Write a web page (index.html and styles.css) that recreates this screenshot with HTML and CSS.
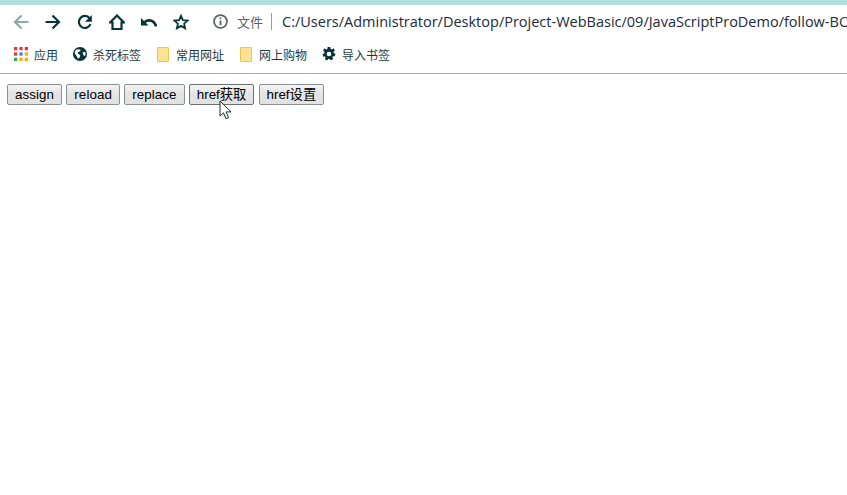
FILE: index.html
```html
<!DOCTYPE html>
<html lang="zh">
<head>
<meta charset="utf-8">
<title>href</title>
<link rel="stylesheet" href="styles.css">
</head>
<body>
<div class="band"></div>
<header class="toolbar">
  <nav class="navicons">
    <svg class="ic" viewBox="0 0 16 16"><path class="back" d="M15.500 8H2M8.500 1.500L2 8l6.500 6.500"/></svg>
    <svg class="ic" viewBox="0 0 16 16"><path d="M.5 8H14M7.500 1.500L14 8l-6.500 6.500"/></svg>
    <svg class="ic" viewBox="0 0 16 16"><path d="M13.500 10.200A6 6 0 1 1 12.600 4.200"/><path class="fill" d="M14.800 1v6.800H8z"/></svg>
    <svg class="ic" viewBox="0 0 16 16"><path d="M8 1.500L1 8.500h2.500V15h9V8.500H15z"/></svg>
    <svg class="ic" viewBox="0 0 16 16"><path class="heavy" d="M15.200 12.500C13.500 6.500 8.500 4.800 3.500 8"/><path class="fill" d="M0 4v7.500h7.500z"/></svg>
    <svg class="ic" viewBox="0 0 16 16"><path class="thin" d="M8 1.800l1.900 4.300 4.700.5-3.500 3.100 1 4.600L8 11.900l-4.100 2.400 1-4.600L1.400 6.600l4.700-.5z"/></svg>
  </nav>
  <div class="address">
    <svg class="info" viewBox="0 0 14 14"><circle cx="7" cy="7" r="6"/><path d="M7 6v4.500M7 3.200v1.600"/></svg>
    <span class="proto">文件</span>
    <span class="sep"></span>
    <span class="url">C:/Users/Administrator/Desktop/Project-WebBasic/09/JavaScriptProDemo/follow-BOM/location.html</span>
  </div>
</header>
<div class="bookmarks">
  <a class="bm bm-apps">
    <svg class="apps" viewBox="0 0 12 12">
      <rect class="r" x="0" y="0" width="2.800" height="2.800"/><rect class="r" x="4.600" y="0" width="2.800" height="2.800"/><rect class="r" x="9.200" y="0" width="2.800" height="2.800"/>
      <rect class="r" x="0" y="4.600" width="2.800" height="2.800"/><rect class="b" x="4.600" y="4.600" width="2.800" height="2.800"/><rect class="y" x="9.200" y="4.600" width="2.800" height="2.800"/>
      <rect class="g" x="0" y="9.200" width="2.800" height="2.800"/><rect class="y" x="4.600" y="9.200" width="2.800" height="2.800"/><rect class="y" x="9.200" y="9.200" width="2.800" height="2.800"/>
    </svg>应用</a>
  <a class="bm bm-globe">
    <svg class="glyph" viewBox="0 0 14 14"><circle class="solid" cx="7" cy="7" r="7"/><path class="white" d="M3 2.800c1.500-.8 3.500-.8 4.500 0 .5 1-1 2-2.300 2.300-1 .5-.5 2 .8 2.200 1.300.5 1.500 1.500.8 2.700-.5 1-1 1.800-1.800 1.500-1-1-1-2-1.700-3C2.500 7.500 1.800 6.500 1.700 5.500 2 4.500 2.400 3.500 3 2.800zM9.500 5.500c1-.7 2-.7 2.800-.5.500 1.500.3 3-.5 4.300-.8-.3-1.300-1-1.500-1.800-.3-.7-.8-1.200-.8-2z"/></svg>杀死标签</a>
  <a class="bm bm-folder"><span class="page"></span>常用网址</a>
  <a class="bm bm-shop"><span class="page"></span>网上购物</a>
  <a class="bm bm-gear">
    <svg class="glyph" viewBox="0 0 14 14"><path class="solid" fill-rule="evenodd" d="M5.700 0h2.600l.4 1.900 1 .5L11.500 1.300l1.400 2.200-1.400 1.300.1 1.200 1.800.8-.5 2.400-1.900 0-.6 1 .8 1.800-2.200 1.300-1.300-1.400H6.300L5 13.500l-2.200-1.300.8-1.800-.6-1-1.900 0-.5-2.400 1.800-.8.100-1.200L1.100 3.500 2.500 1.300l1.800 1.100 1-.5zM7 4.700a2.300 2.300 0 1 0 0 4.600 2.300 2.300 0 0 0 0-4.600z"/></svg>导入书签</a>
</div>
<main class="content">
  <button class="btn" type="button">assign</button>
  <button class="btn" type="button">reload</button>
  <button class="btn" type="button">replace</button>
  <button class="btn btn-zh btn-hover" type="button">href获取</button>
  <button class="btn btn-zh" type="button">href设置</button>
</main>
<svg class="cursor" viewBox="0 0 14 21"><path d="M1 1v15l3.500-3.200 2.500 6 2.600-1.100-2.500-5.800h5z"/></svg>
</body>
</html>
```
FILE: styles.css
```css
html, body {
  margin: 0;
  padding: 0;
  background: #fff;
  overflow: hidden;
  height: 100%;
}
body {
  position: relative;
  font-family: "Open Sans", "Noto Sans CJK SC", sans-serif;
  color: #1f3a3d;
}
.band {
  height: 5px;
  background: #b2dfdc;
}
.toolbar {
  height: 33px;
  display: flex;
  align-items: center;
  white-space: nowrap;
  overflow: hidden;
}
.navicons {
  display: flex;
  align-items: center;
  gap: 16px;
  padding-left: 13px;
  width: 201px;
  box-sizing: border-box;
  flex: none;
}
.ic {
  width: 16px;
  height: 16px;
  flex: none;
  fill: none;
  stroke: #05343a;
  stroke-width: 2.200;
}
.ic .back { stroke: #90a7a8; }
.ic .fill { fill: #05343a; stroke: none; }
.ic .thin { stroke-width: 1.800; }
.ic .heavy { stroke-width: 2.600; }
.address {
  display: flex;
  align-items: center;
  min-width: 0;
  padding-left: 12px;
}
.info {
  width: 15px;
  height: 15px;
  flex: none;
  fill: none;
  stroke: #5f6368;
  stroke-width: 1.700;
}
.proto {
  margin-left: 9px;
  font-size: 13px;
  color: #5f6368;
}
.sep {
  width: 1px;
  height: 17px;
  background: #9a9a9a;
  margin: 0 9px 0 8px;
  flex: none;
}
.url {
  font-size: 14.500px;
  margin-left: 1px;
  color: #202b3a;
}
.bookmarks {
  height: 36px;
  box-sizing: border-box;
  border-bottom: 1px solid #a9b1b0;
  display: flex;
  align-items: center;
  padding: 0 0 3px 14px;
  font-size: 12px;
  white-space: nowrap;
}
.bm {
  display: flex;
  align-items: center;
  color: #1f3a3d;
  font-family: "Noto Sans CJK SC", sans-serif;
}
.bm-apps { width: 59px; }
.bm-globe { width: 84px; }
.bm-folder { width: 83px; }
.bm-shop { width: 82px; }
.apps {
  width: 14px;
  height: 14px;
  margin-right: 6px;
}
.apps .r { fill: #e53935; }
.apps .b { fill: #2f80ed; }
.apps .y { fill: #f9ab00; }
.apps .g { fill: #34a853; }
.glyph {
  width: 14px;
  height: 14px;
  margin-right: 6px;
}
.solid { fill: #05343a; }
.white { fill: #fff; }
.page {
  display: block;
  width: 10px;
  height: 13px;
  background: #fde293;
  border: 1px solid #eec64f;
  border-radius: 1px;
  margin-right: 7px;
}
.content {
  padding: 10px 7px;
  display: flex;
  align-items: flex-start;
  gap: 4.200px;
}
.btn {
  height: 21px;
  box-sizing: border-box;
  padding: 0 7px;
  margin: 0;
  font-family: "Liberation Sans", "Noto Sans CJK SC", sans-serif;
  font-size: 13.333px;
  line-height: 17px;
  letter-spacing: .1px;
  color: #000;
  border: 1px solid #8a8f8f;
  border-radius: 2px;
  background: linear-gradient(#f4f4f4, #e4e4e4 45%, #e2e2e2);
}
.btn-zh { letter-spacing: 0; }
.btn-hover { border-color: #6c7070; }
.cursor {
  position: absolute;
  left: 219px;
  top: 100px;
  width: 14px;
  height: 21px;
  fill: #fff;
  stroke: #1f2a2c;
  stroke-width: 1;
}
```
